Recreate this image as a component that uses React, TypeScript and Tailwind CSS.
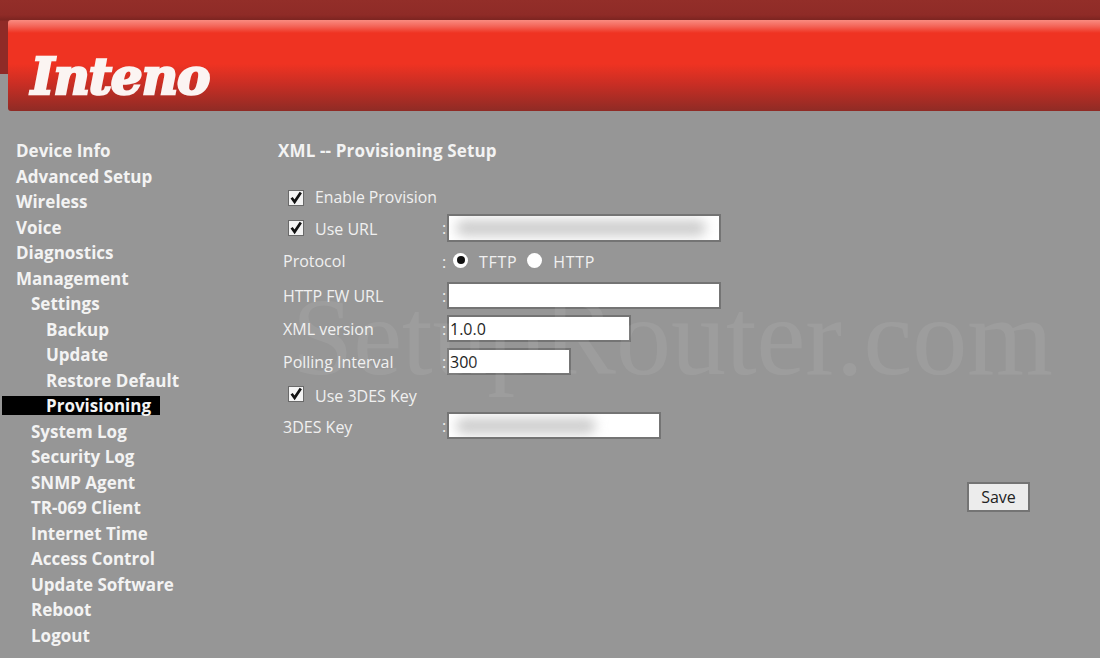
const menu: [string, number, boolean?][] = [
  ['Device Info', 0],
  ['Advanced Setup', 0],
  ['Wireless', 0],
  ['Voice', 0],
  ['Diagnostics', 0],
  ['Management', 0],
  ['Settings', 1],
  ['Backup', 2],
  ['Update', 2],
  ['Restore Default', 2],
  ['Provisioning', 2, true],
  ['System Log', 1],
  ['Security Log', 1],
  ['SNMP Agent', 1],
  ['TR-069 Client', 1],
  ['Internet Time', 1],
  ['Access Control', 1],
  ['Update Software', 1],
  ['Reboot', 1],
  ['Logout', 1],
];

function Check() {
  return (
    <span className="w-[16px] h-[16px] bg-[#f4f4f4] border border-[#6a6a6a] flex items-center justify-center shrink-0">
      <svg viewBox="0 0 14 14" className="w-[14px] h-[14px]" aria-hidden="true">
        <path d="M2.6 6.8 L5.6 10.8 L11.8 1.6" fill="none" stroke="#111" strokeWidth="2.7" />
      </svg>
    </span>
  );
}

function Radio({ on }: { on?: boolean }) {
  return (
    <span className="w-[15px] h-[15px] rounded-full bg-white flex items-center justify-center shrink-0">
      {on && <span className="w-[8px] h-[8px] rounded-full bg-[#111]" />}
    </span>
  );
}

function Field({ width, value, blur }: { width: string; value?: string; blur?: string }) {
  return (
    <div className={`h-full ${width} bg-white border-2 border-[#747474] flex items-center overflow-hidden px-[1px] text-[16px] text-[#222]`}>
      {value}
      {blur && <div className={`h-[16px] ${blur} ml-[6px] bg-[#cdcdcd] blur-[6px] rounded-full`} />}
    </div>
  );
}

export default function App() {
  return (
    <div className="relative w-[1100px] h-[658px] overflow-hidden bg-[#969696] font-['Open_Sans','Noto_Sans',sans-serif]">
      {/* top band */}
      <div className="pt-[20px] pl-[8px] bg-[linear-gradient(to_bottom,#932e29_0px,#8f2b27_15px,#7c2420_20px,#8f2b27_21px,#8f2b27_74px,transparent_74px)]">
        <div className="h-[91px] rounded-l-[3px] flex items-start pl-[23px] pt-[27px] bg-[linear-gradient(to_bottom,#f98b80_0px,#f4665a_6px,#ef3322_13px,#ef3322_44px,#c92e24_64px,#8f2b25_91px)]">
          <span className="font-['DejaVu_Serif',serif] font-bold italic text-[50px] leading-[60px] tracking-[-1px] text-[#fbf4f2] [-webkit-text-stroke:2.5px_#fbf4f2]">
            Inteno
          </span>
        </div>
      </div>

      <div className="flex">
        <nav className="w-[278px] pt-[27px] shrink-0">
          {menu.map(([label, level, active]) => (
            <div key={label} className="h-[25.53px] flex items-center text-[17px] font-bold text-[#f3f3f3] whitespace-nowrap">
              <span
                className={
                  active
                    ? 'ml-[2px] w-[158px] h-[19px] pl-[44px] bg-black flex items-center'
                    : level === 0
                    ? 'pl-[16px]'
                    : level === 1
                    ? 'pl-[31px]'
                    : 'pl-[46px]'
                }
              >
                {label}
              </span>
            </div>
          ))}
        </nav>

        <main className="relative flex-1 pt-[28px] text-[#f0f0f0] text-[16px]">
          <h1 className="h-[23px] flex items-center font-bold text-[17px] tracking-[0.15px] text-[#f3f3f3]">XML -- Provisioning Setup</h1>

          <div className="mt-[24px] pl-[10px] h-[24px] flex items-center gap-[11px]">
            <Check />
            <span className="text-[15.8px]">Enable Provision</span>
          </div>
          <div className="mt-[4px] h-[28px] flex items-center">
            <div className="w-[164px] pl-[10px] flex items-center gap-[11px]">
              <Check />
              <span className="translate-y-px">Use URL</span>
            </div>
            <span className="w-[5px]">:</span>
            <Field width="w-[274px]" blur="w-[250px]" />
          </div>
          <div className="mt-[6px] h-[28px] flex items-center">
            <span className="w-[164px] pl-[5px] -translate-y-px">Protocol</span>
            <span className="w-[5px]">:</span>
            <div className="ml-[6px] flex items-center">
              <span className="-translate-y-[2px]"><Radio on /></span>
              <span className="ml-[11px] tracking-[0.7px]">TFTP</span>
              <span className="ml-[10px] -translate-y-[2px]"><Radio /></span>
              <span className="ml-[11px] tracking-[0.7px]">HTTP</span>
            </div>
          </div>
          <div className="mt-[6px] h-[27px] flex items-center">
            <span className="w-[164px] pl-[5px]">HTTP FW URL</span>
            <span className="w-[5px]">:</span>
            <Field width="w-[274px]" />
          </div>
          <div className="mt-[6px] h-[27px] flex items-center">
            <span className="w-[164px] pl-[5px]">XML version</span>
            <span className="w-[5px]">:</span>
            <Field width="w-[184px]" value="1.0.0" />
          </div>
          <div className="mt-[6px] h-[27px] flex items-center">
            <span className="w-[164px] pl-[5px]">Polling Interval</span>
            <span className="w-[5px]">:</span>
            <Field width="w-[124px]" value="300" />
          </div>
          <div className="mt-[8px] pl-[10px] h-[26px] flex items-center gap-[11px]">
            <span className="-translate-y-[2px]"><Check /></span>
            <span>Use 3DES Key</span>
          </div>
          <div className="mt-[3px] h-[27px] flex items-center">
            <span className="w-[164px] pl-[5px] translate-y-px">3DES Key</span>
            <span className="w-[5px]">:</span>
            <Field width="w-[214px]" blur="w-[140px]" />
          </div>

          <div className="mt-[43px] ml-[689px] w-[63px] h-[30px] border-2 border-[#747474] bg-[#ececec] text-[#222] flex items-center justify-center">
            Save
          </div>
        </main>
      </div>

      {/* watermark */}
      <div className="absolute left-[292px] top-[280px] font-['Liberation_Serif',serif] text-[110px] leading-[115px] text-white/[0.07] whitespace-nowrap pointer-events-none">
        SetupRouter.com
      </div>
    </div>
  );
}
